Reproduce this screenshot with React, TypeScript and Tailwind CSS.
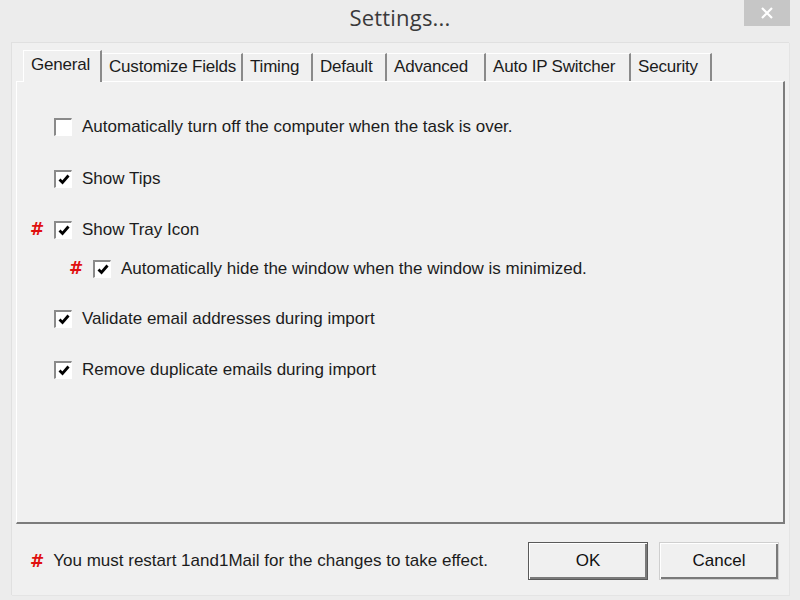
const tabs = [
  { label: "General", w: "w-[79px]" },
  { label: "Customize Fields", w: "w-[141px]" },
  { label: "Timing", w: "w-[70px]" },
  { label: "Default", w: "w-[74px]" },
  { label: "Advanced", w: "w-[99px]" },
  { label: "Auto IP Switcher", w: "w-[145px]" },
  { label: "Security", w: "w-[81px]" },
];

const options = [
  { label: "Automatically turn off the computer when the task is over.", checked: false, mark: false, indent: false, gap: "mt-[0px]" },
  { label: "Show Tips", checked: true, mark: false, indent: false, gap: "mt-[32px]" },
  { label: "Show Tray Icon", checked: true, mark: true, indent: false, gap: "mt-[31px]" },
  { label: "Automatically hide the window when the window is minimized.", checked: true, mark: true, indent: true, gap: "mt-[19px]" },
  { label: "Validate email addresses during import", checked: true, mark: false, indent: false, gap: "mt-[30px]" },
  { label: "Remove duplicate emails during import", checked: true, mark: false, indent: false, gap: "mt-[31px]" },
];

function Hash() {
  return <span className="text-[#e01010] font-bold text-[17px] leading-none font-['DejaVu_Sans',sans-serif]">#</span>;
}

function Checkbox({ checked }: { checked: boolean }) {
  return (
    <span className="w-[18px] h-[18px] shrink-0 border-t-2 border-l-2 border-b border-r border-t-[#8a8a8a] border-l-[#8a8a8a] border-b-[#ffffff] border-r-[#ffffff] bg-white flex items-center justify-center">
      {checked && (
        <svg width="12" height="11" viewBox="0 0 12 11">
          <path d="M1.5 5.5 L4.5 8.5 L10.5 1.5" fill="none" stroke="#000" strokeWidth="2.8" />
        </svg>
      )}
    </span>
  );
}

function Button({ label, primary }: { label: string; primary?: boolean }) {
  return (
    <button
      className={`w-[120px] h-[38px] bg-[#f0f0f0] text-[17px] text-[#111] border ${
        primary ? "border-[#5a5a5a]" : "border-[#cfcfcf]"
      } shadow-[inset_1px_1px_0_#ffffff,inset_-2px_-2px_0_#7a7a7a]`}
    >
      {label}
    </button>
  );
}

export default function App() {
  return (
    <div className="w-[800px] h-[600px] bg-[#ececec] relative font-['Liberation_Sans',Arial,sans-serif] text-[#1c1c1c] overflow-hidden">
      <div className="h-[42px] flex items-center justify-center pb-[8px]">
        <span className="text-[22px] text-[#3a3a3a] font-['Open_Sans',sans-serif] tracking-[0.2px]">Settings...</span>
      </div>
      <div className="absolute top-0 right-[10px] w-[46px] h-[26px] bg-[#c6c6c6] flex items-center justify-center">
        <svg width="14" height="14" viewBox="0 0 14 14">
          <path d="M2 2 L12 12 M12 2 L2 12" stroke="#ffffff" strokeWidth="2.2" />
        </svg>
      </div>

      <div className="mx-[11px] h-[553px] bg-[#f0f0f0] border-t border-l border-[#e0e0e0] shadow-[1px_1px_0_#e4e4e4] flex flex-col px-[4px] pt-[6px]">
        <div className="flex items-end h-[32px] pl-[7px] text-[17px] tracking-[-0.2px]">
          {tabs.map((t, i) =>
            i === 0 ? (
              <div
                key={t.label}
                className={`${t.w} h-[32px] bg-[#f0f0f0] border-t border-l border-[#ffffff] border-r-2 border-r-[#8a8a8a] pl-[7px] pt-[2px] relative z-10 -mb-[1px] leading-[24px]`}
              >
                {t.label}
              </div>
            ) : (
              <div
                key={t.label}
                className={`${t.w} h-[28px] border-t border-[#ffffff] border-r-2 border-r-[#8a8a8a] pl-[7px] leading-[25px] whitespace-nowrap`}
              >
                {t.label}
              </div>
            )
          )}
        </div>
        <div className="h-[443px] border-t border-l border-[#ffffff] border-r-2 border-b-2 border-r-[#7c7c7c] border-b-[#7c7c7c] pt-[35px] pl-[13px] text-[17px]">
          {options.map((o) => (
            <div key={o.label} className={`flex items-center h-[20px] ${o.gap} ${o.indent ? "pl-[39px]" : "pl-[0px]"}`}>
              <span className="w-[24px] shrink-0">{o.mark ? <Hash /> : null}</span>
              <Checkbox checked={o.checked} />
              <span className="ml-[10px] whitespace-nowrap">{o.label}</span>
            </div>
          ))}
        </div>
        <div className="flex items-center h-[38px] mt-[18px]">
          <span className="pl-[14px] flex items-center gap-[9px] text-[17px] flex-1">
            <Hash />
            <span>You must restart 1and1Mail for the changes to take effect.</span>
          </span>
          <div className="flex gap-[11px] pr-[6px]">
            <Button label="OK" primary />
            <Button label="Cancel" />
          </div>
        </div>
      </div>
    </div>
  );
}
